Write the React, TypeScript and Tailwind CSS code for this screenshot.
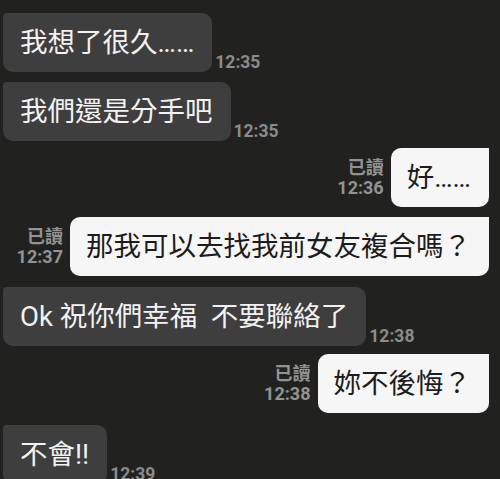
const font = "font-['Roboto','Noto_Sans_CJK_TC',sans-serif]";

type Msg = {
  side: "left" | "right";
  text: string;
  time: string;
  mt: string;
};

const messages: Msg[] = [
  { side: "left", text: "我想了很久……", time: "12:35", mt: "mt-[13px]" },
  { side: "left", text: "我們還是分手吧", time: "12:35", mt: "mt-[10px]" },
  { side: "right", text: "好……", time: "12:36", mt: "mt-[7px]" },
  { side: "right", text: "那我可以去找我前女友複合嗎？", time: "12:37", mt: "mt-[10px]" },
  { side: "left", text: "Ok 祝你們幸福  不要聯絡了", time: "12:38", mt: "mt-[11px]" },
  { side: "right", text: "妳不後悔？", time: "12:38", mt: "mt-[8px]" },
  { side: "left", text: "不會!!", time: "12:39", mt: "mt-[12px]" },
];

const LeftRow = ({ msg }: { msg: Msg }) => (
  <div className={`flex items-end ${msg.mt}`}>
    <div className="ml-[3px] rounded-[10px] rounded-tl-[4px] bg-[#3e3e3e] py-[13px] pl-[17px] pr-[18px] text-[27.5px] leading-[33px] text-[#f2f2f2] whitespace-pre">
      {msg.text}
    </div>
    <span className="ml-[3px] mb-[1px] text-[17.5px] font-bold leading-none text-[#8b8b8b]">
      {msg.time}
    </span>
  </div>
);

const RightRow = ({ msg }: { msg: Msg }) => (
  <div className={`flex items-center justify-end pr-[11px] ${msg.mt}`}>
    <div className="mr-[7px] flex flex-col items-end text-[18px] font-bold leading-[20px] text-[#939393]">
      <span>已讀</span>
      <span>{msg.time}</span>
    </div>
    <div className="rounded-[10px] rounded-tr-none bg-[#f6f6f6] py-[13px] pl-[16px] pr-[18px] text-[27.5px] leading-[33px] text-[#1c1c1c]">
      {msg.text}
    </div>
  </div>
);

export default function App() {
  return (
    <div className={`h-[479px] w-[500px] overflow-hidden bg-[#212220] ${font}`}>
      <div className="flex flex-col">
        {messages.map((m, i) =>
          m.side === "left" ? <LeftRow key={i} msg={m} /> : <RightRow key={i} msg={m} />
        )}
      </div>
    </div>
  );
}
